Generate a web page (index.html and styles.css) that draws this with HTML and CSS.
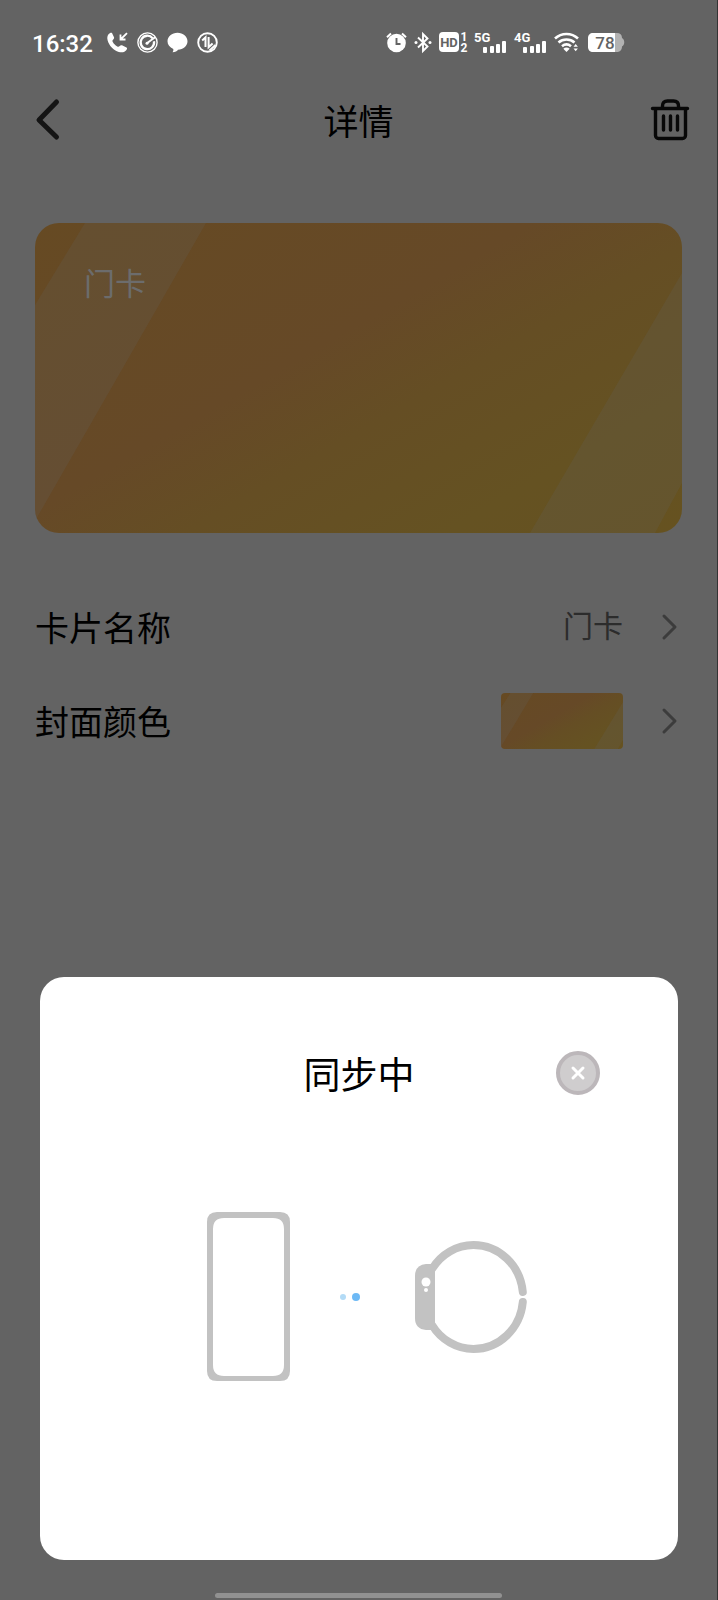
FILE: index.html
```html
<!DOCTYPE html>
<html lang="zh-CN">
<head>
<meta charset="utf-8">
<meta name="viewport" content="width=device-width, initial-scale=1">
<title>详情</title>
<link rel="stylesheet" href="styles.css">
</head>
<body>
<div class="page">
  <div class="status">
    <div class="status-group status-left">
      <span class="time">16:32</span>
      <svg width="21" height="21" viewBox="0 0 21 21"><path d="M1.500 2.200C2.600.8 4.300.2 5 1l2 4.300c.4 1-.1 1.600-1.200 2.600-.6.6-.4 1.400.3 2.600 1 1.600 2.200 2.800 3.800 3.700 1.100.7 1.900.8 2.500.1.900-1 1.700-1.400 2.600-1l4.500 2.200c.9.5.7 1.700-.5 3-1.800 1.900-4.300 2.300-7.200 1.400C6.600 18.400 1.900 13.500.6 8.200 0 5.700.3 3.700 1.500 2.200Z" fill="#fff"/><path d="M20 1.200 14 7M13.500 2.500v5h5" fill="none" stroke="#fff" stroke-width="1.800"/></svg>
      <svg width="21" height="21" viewBox="0 0 21 21" fill="none" stroke="#fff"><circle cx="10.500" cy="10.500" r="9.600" stroke-width="1.400"/><path d="M15.600 6.200A6.700 6.700 0 1 0 17 9.300" stroke-width="2.300"/><path d="M9.500 11.500 18.500 5" stroke-width="2"/><circle cx="10" cy="11.200" r="1.500" fill="#fff" stroke="none"/></svg>
      <svg width="21" height="21" viewBox="0 0 21 21"><path d="M10.500.8c5.600 0 10 3.700 10 8.500s-4.400 8.500-9.500 8.500c-.8 1.300-2.700 2.300-5.500 2.400.8-.9 1-2 .8-3.200C2.700 15.500.5 12.700.5 9.300.5 4.500 4.900.8 10.500.8Z" fill="#fff"/></svg>
      <svg width="21" height="21" viewBox="0 0 21 21" fill="none" stroke="#fff"><circle cx="10.500" cy="10.500" r="9.300" stroke-width="1.900"/><path d="M5.200 8.500 8.500 5.300V15M11.600 5v10.200l4-3.800" stroke-width="2"/><path d="M12.500 18.500 18.500 13" stroke-width="2"/></svg>
    </div>
    <div class="status-group">
      <svg width="21" height="21" viewBox="0 0 21 21"><circle cx="10.500" cy="11" r="9.300" fill="#fff"/><path d="M1 5.200 5 1.500M20 5.200 16 1.500" stroke="#fff" stroke-width="2"/><path d="M10.500 6v6h4" fill="none" stroke="#636363" stroke-width="1.900"/></svg>
      <svg width="18" height="21" viewBox="0 0 18 21" fill="none" stroke="#fff" stroke-width="1.900"><path d="M4 5.500 13.500 14.500 9 19V2l4.500 4.500L4 15.500"/><circle cx="2" cy="10.500" r="1.500" fill="#fff" stroke="none"/><circle cx="16" cy="10.500" r="1.500" fill="#fff" stroke="none"/></svg>
      <svg width="28" height="21" viewBox="0 0 28 21"><rect y="0" width="20" height="20" rx="4" fill="#fff"/><text class="glyph-hd" x="10" y="15">HD</text><text class="glyph-sim" x="25" y="9">1</text><text class="glyph-sim" x="25" y="20">2</text></svg>
      <svg width="33" height="21" viewBox="0 0 33 21" fill="#fff"><text class="glyph-net" x="0" y="10">5G</text><rect x="9" y="15" width="4" height="6" rx="1"/><rect x="16" y="14" width="4" height="7" rx="1"/><rect x="22" y="12" width="4" height="9" rx="1"/><rect x="28" y="9" width="4" height="12" rx="1"/></svg>
      <svg width="33" height="21" viewBox="0 0 33 21" fill="#fff"><text class="glyph-net" x="0" y="10">4G</text><rect x="9" y="15" width="4" height="6" rx="1"/><rect x="16" y="14" width="4" height="7" rx="1"/><rect x="22" y="12" width="4" height="9" rx="1"/><rect x="28" y="9" width="4" height="12" rx="1"/></svg>
      <svg width="25" height="21" viewBox="0 0 25 21" fill="none" stroke="#fff" stroke-width="2.600"><path d="M1 6.500C7.500.4 17.500.4 24 6.500M4.500 10.500c4.500-4 11.500-4 16 0M8 14.300c2.700-2.200 6.300-2.200 9 0"/><path d="M9.300 16.800c1.800-1.600 4.600-1.600 6.400 0L12.500 20Z" fill="#fff" stroke="none"/><path d="m19.500 14.800 2.200-2.800 2.200 2.800ZM19.500 16.500l2.200 2.800 2.200-2.800Z" fill="#fff" stroke="none"/></svg>
      <svg class="battery" width="36" height="19" viewBox="0 0 36 19"><path d="M27 0h2c3 0 5 1.800 5 5 3 1.500 3 7 0 8.500 0 3.300-2 5.500-5 5.500h-2Z" fill="#b2b2b2"/><path d="M5 0h22v19H5c-3 0-5-2-5-5V5c0-3 2-5 5-5Z" fill="#fff"/><text class="glyph-battery" x="17" y="16">78</text></svg>
    </div>
  </div>

  <header class="header">
    <button class="icon-button" type="button" aria-label="返回">
      <svg width="24" height="42" viewBox="0 0 24 42"><path d="M20.500 3 3 21l17.500 17" fill="none" stroke="#141414" stroke-width="5" stroke-linecap="round" stroke-linejoin="round"/></svg>
    </button>
    <h1 class="title">详情</h1>
    <button class="icon-button" type="button" aria-label="删除">
      <svg width="38" height="42" viewBox="0 0 38 42" fill="none" stroke="#080808" stroke-width="3.400" stroke-linecap="round" stroke-linejoin="round"><path d="M1.500 9.500h35M4.500 9.500v27a3 3 0 0 0 3 3h24a3 3 0 0 0 3-3v-27M11.500 9V7q0-5 5-5h6q5 0 5 5v2M12.500 17v14M19.500 17v14M26.500 17v14"/></svg>
    </button>
  </header>

  <main class="content">
    <section class="card">
      <svg class="card-shine" viewBox="0 0 647 310" preserveAspectRatio="none"><path d="M50 0H171L0 298V82ZM647 50 495 310H620L647 260Z"/></svg>
      <span class="card-name">门卡</span>
    </section>
    <button class="row" type="button">
      <span class="row-label">卡片名称</span>
      <span class="row-value">门卡</span>
      <svg class="chevron" width="16" height="26" viewBox="0 0 16 26"><path d="m2 2 11 11L2 24"/></svg>
    </button>
    <button class="row" type="button">
      <span class="row-label">封面颜色</span>
      <span class="swatch"><svg class="card-shine" viewBox="0 0 647 310" preserveAspectRatio="none"><path d="M50 0H171L0 298V82ZM647 50 495 310H620L647 260Z"/></svg></span>
      <svg class="chevron" width="16" height="26" viewBox="0 0 16 26"><path d="m2 2 11 11L2 24"/></svg>
    </button>
  </main>

  <section class="dialog" role="dialog" aria-labelledby="sync-title">
    <div class="dialog-head">
      <h2 class="dialog-title" id="sync-title">同步中</h2>
      <button class="close" type="button" aria-label="关闭">
        <svg width="14" height="14" viewBox="0 0 14 14"><path d="m2 2 10 10M12 2 2 12" stroke="#fff" stroke-width="3" stroke-linecap="round"/></svg>
      </button>
    </div>
    <div class="sync">
      <svg width="84" height="170" viewBox="0 0 84 170"><path fill="#c2c2c2" fill-rule="evenodd" d="M10 0h63q10 0 10 10v149q0 10-10 10H10q-10 0-10-10V10Q0 0 10 0ZM17 6Q6 6 6 17v136q0 11 11 11h49q11 0 11-11V17Q77 6 66 6Z"/></svg>
      <svg class="sync-dots" width="20" height="10" viewBox="0 0 20 10"><circle cx="3" cy="5" r="3" fill="#b3dbf6"/><circle cx="16" cy="5" r="4" fill="#6db9f5"/></svg>
      <svg width="112" height="112" viewBox="0 0 112 112"><path d="M17 28A49.500 52 0 0 1 58.500 4A49.500 52 0 0 1 107.800 51M107.800 61A49.500 52 0 0 1 58.500 108A49.500 52 0 0 1 17 84" fill="none" stroke="#c2c2c2" stroke-width="8" stroke-linecap="round"/><path fill="#c2c2c2" fill-rule="evenodd" d="M11 23h5l4 4v58l-4 4h-5Q0 88 0 77V35Q0 24 11 23Z"/><circle cx="11" cy="41" r="4.500" fill="#fff"/><circle cx="11" cy="49" r="2" fill="#fff"/></svg>
    </div>
  </section>
  <div class="home-bar"></div>
</div>
</body>
</html>
```
FILE: styles.css
```css
* {
  box-sizing: border-box;
}

body {
  margin: 0;
  background: #636363;
  color: #000;
  font-family: "Noto Sans CJK SC", sans-serif;
}

button {
  padding: 0;
  border: 0;
  background: none;
  color: inherit;
  font: inherit;
}

svg {
  display: block;
  flex: none;
  overflow: visible;
}

.page {
  position: relative;
  min-height: 100vh;
  border-right: 1px solid #333;
}

.status {
  display: flex;
  align-items: center;
  justify-content: space-between;
  height: 84px;
  padding: 0 93px 0 32px;
}

.status-group {
  display: flex;
  align-items: center;
  gap: 7px;
}

.status-left {
  gap: 9px;
}

.time {
  margin-right: 5px;
  padding-top: 3px;
  color: #fff;
  font: 500 24px/30px Roboto, sans-serif;
}

.glyph-hd,
.glyph-sim,
.glyph-net,
.glyph-battery {
  fill: #fff;
  font-family: Roboto, sans-serif;
  font-weight: 700;
}

.glyph-hd {
  fill: #636363;
  font-size: 13px;
  text-anchor: middle;
}

.glyph-sim {
  font-size: 12px;
  text-anchor: middle;
}

.glyph-net {
  font-size: 13px;
}

.battery {
  margin-left: 2px;
}

.glyph-battery {
  fill: #636363;
  font-size: 17px;
  font-weight: 500;
  text-anchor: middle;
}

.header {
  display: grid;
  grid-template-columns: 1fr auto 1fr;
  align-items: center;
  height: 72px;
  padding: 0 28px 0 36px;
}

.icon-button {
  justify-self: start;
}

.icon-button:last-child {
  justify-self: end;
}

.title {
  margin: 0;
  padding-right: 8px;
  font-size: 35px;
  font-weight: 400;
  line-height: 52px;
}

.content {
  padding: 67px 35px 0;
}

.card,
.swatch {
  position: relative;
  overflow: hidden;
  background: linear-gradient(150deg, #664a23, #664927 42%, #654e24 58%, #655222 80%, #665220);
}

.card {
  height: 310px;
  margin-bottom: 47px;
  padding: 36px 49px;
  border-radius: 24px;
}

.card-shine {
  position: absolute;
  inset: 0;
  width: 100%;
  height: 100%;
  fill: #646464;
  fill-opacity: 0.2;
}

.card-name {
  position: relative;
  color: #6c6c6c;
  font-size: 31px;
  line-height: 46px;
}

.row {
  display: flex;
  align-items: center;
  width: 100%;
  height: 94px;
  padding-right: 4px;
  text-align: left;
}

.row-label {
  flex: 1;
  font-size: 34px;
  line-height: 50px;
}

.row-value {
  padding-bottom: 6px;
  color: #2c2c2c;
  font-size: 30px;
  line-height: 44px;
}

.swatch {
  width: 122px;
  height: 56px;
  border-radius: 4px;
}

.chevron {
  margin-left: 39px;
  fill: none;
  stroke: #3c3c3c;
  stroke-width: 3;
  stroke-linecap: round;
  stroke-linejoin: round;
}

.dialog {
  position: absolute;
  right: 39px;
  bottom: 40px;
  left: 40px;
  padding: 68px 78px 178px;
  border-radius: 24px;
  background: #fff;
}

.dialog-head {
  display: grid;
  grid-template-columns: 1fr auto 1fr;
  align-items: center;
}

.dialog-title {
  grid-column: 2;
  margin: 0;
  font-size: 37px;
  font-weight: 400;
  line-height: 56px;
}

.close {
  display: grid;
  place-items: center;
  justify-self: end;
  width: 44px;
  height: 44px;
  border: 4px solid #bcb7ba;
  border-radius: 50%;
  background: #cfcdce;
}

.sync {
  display: flex;
  align-items: center;
  justify-content: center;
  gap: 49px;
  margin-top: 111px;
  padding-left: 16px;
}

.sync-dots {
  margin-right: 6px;
}

.home-bar {
  position: absolute;
  bottom: 2px;
  left: 30%;
  width: 40%;
  height: 5px;
  border-radius: 3px;
  background: #919191;
}
```
